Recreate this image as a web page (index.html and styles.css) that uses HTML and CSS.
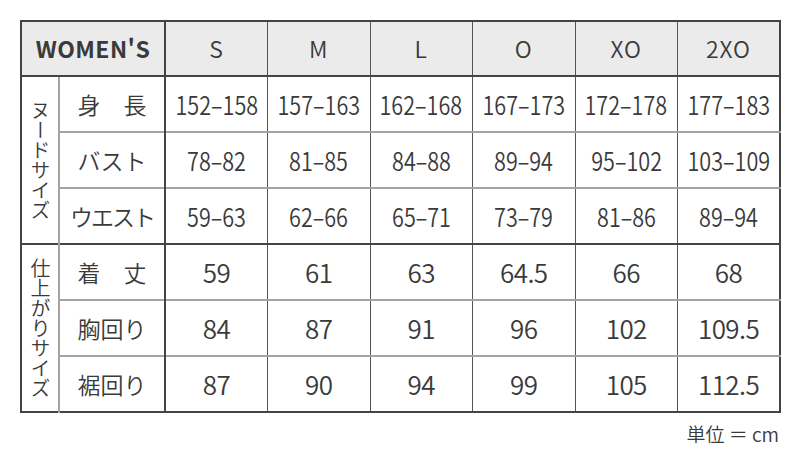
FILE: index.html
```html
<!DOCTYPE html>
<html lang="ja">
<head>
<meta charset="utf-8">
<link rel="stylesheet" href="styles.css">
</head>
<body>
<div class="wrap">
<table class="size">
  <colgroup>
    <col class="c-v"><col class="c-l">
    <col class="c-d"><col class="c-d"><col class="c-d"><col class="c-d"><col class="c-d"><col class="c-d">
  </colgroup>
  <thead>
    <tr>
      <th colspan="2" class="brand">WOMEN'S</th>
      <th>S</th><th>M</th><th>L</th><th>O</th><th>XO</th><th>2XO</th>
    </tr>
  </thead>
  <tbody class="grp">
    <tr>
      <td rowspan="3" class="vert">ヌードサイズ</td>
      <td class="lab">身　長</td>
      <td><span class="rng">152–158</span></td><td><span class="rng">157–163</span></td><td><span class="rng">162–168</span></td><td><span class="rng">167–173</span></td><td><span class="rng">172–178</span></td><td><span class="rng">177–183</span></td>
    </tr>
    <tr>
      <td class="lab">バスト</td>
      <td><span class="rng">78–82</span></td><td><span class="rng">81–85</span></td><td><span class="rng">84–88</span></td><td><span class="rng">89–94</span></td><td><span class="rng">95–102</span></td><td><span class="rng">103–109</span></td>
    </tr>
    <tr>
      <td class="lab narrow">ウエスト</td>
      <td><span class="rng">59–63</span></td><td><span class="rng">62–66</span></td><td><span class="rng">65–71</span></td><td><span class="rng">73–79</span></td><td><span class="rng">81–86</span></td><td><span class="rng">89–94</span></td>
    </tr>
  </tbody>
  <tbody class="grp">
    <tr>
      <td rowspan="3" class="vert">仕上がりサイズ</td>
      <td class="lab">着　丈</td>
      <td>59</td><td>61</td><td>63</td><td>64.5</td><td>66</td><td>68</td>
    </tr>
    <tr>
      <td class="lab">胸回り</td>
      <td>84</td><td>87</td><td>91</td><td>96</td><td>102</td><td>109.5</td>
    </tr>
    <tr>
      <td class="lab">裾回り</td>
      <td>87</td><td>90</td><td>94</td><td>99</td><td>105</td><td>112.5</td>
    </tr>
  </tbody>
</table>
<p class="unit">単位 ＝ cm</p>
</div>
</body>
</html>
```

FILE: styles.css
```css
html, body {
  margin: 0;
  padding: 0;
  background: #ffffff;
}
body {
  font-family: "Noto Sans CJK JP", "Noto Sans", sans-serif;
  color: #3a3a3a;
}
.wrap {
  padding: 20px 0 0 20px;
  width: 759px;
}
.size {
  border-collapse: collapse;
  table-layout: fixed;
  width: 759px;
  border: 2px solid #444;
}
.c-v { width: 38px; }
.c-l { width: 106px; }
.c-d { width: 102.5px; }
.size th, .size td {
  padding: 0;
  text-align: center;
  vertical-align: middle;
  border-top: 2px solid #a3a3a3;
  border-left: 1px solid #555;
  border-right: 1px solid #555;
  line-height: 1;
}
.size thead th {
  height: 53px;
  background: #ebebeb;
  font-weight: 350;
  font-size: 23px;
  letter-spacing: 1px;
  border-bottom: 2px solid #444;
  border-top: 2px solid #444;
}
.size thead th.brand {
  font-weight: 700;
  font-size: 23px;
  letter-spacing: 0.4px;
  border-right: 2px solid #444;
}
.size tbody td {
  height: 54px;
  font-size: 26px;
  font-weight: 350;
  letter-spacing: -0.6px;
}
.rng {
  display: inline-block;
  letter-spacing: 0;
  transform: scaleX(0.83);
}
.size tbody.grp tr:first-child td {
  border-top: 2px solid #444;
}
.size td.vert {
  writing-mode: vertical-rl;
  text-orientation: upright;
  font-size: 20px;
  font-weight: 350;
  letter-spacing: 0;
  border-right: 2px solid #a3a3a3;
  border-left: 2px solid #444;
}
.size td.lab {
  font-size: 23px;
  font-weight: 350;
  letter-spacing: 0;
  border-right: 2px solid #444;
  border-left: 2px solid #a3a3a3;
}
.size td.lab.narrow {
  letter-spacing: -2px;
}
.unit {
  margin: 11px 0 0;
  text-align: right;
  font-size: 19px;
  font-weight: 350;
  color: #3a3a3a;
  line-height: 1;
}
```
